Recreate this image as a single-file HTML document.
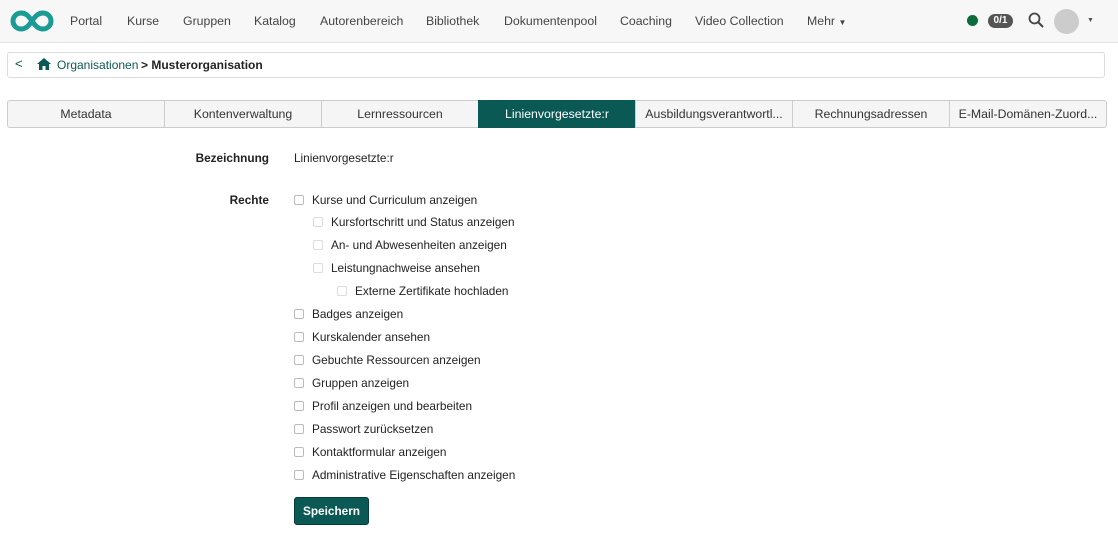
<!DOCTYPE html>
<html><head><meta charset="utf-8"><style>
body{margin:0;width:1118px;height:540px;background:#fff;font-family:"Liberation Sans",sans-serif;font-size:11.8px;color:#222;position:relative;overflow:hidden}
.nav{position:absolute;left:0;top:0;width:1118px;height:42px;background:#f7f7f7;border-bottom:1px solid #e5e5e5}
.nav a{position:absolute;top:14px;color:#444;font-size:12.3px}
.bc{position:absolute;left:7px;top:52px;width:1096px;height:24px;border:1px solid #ddd;border-radius:3px}
.bc span{position:absolute;top:5px;font-size:12px}
.tabs{position:absolute;left:7px;top:100px;display:flex}
.tab{width:156px;height:26px;border:1px solid #ccc;border-right:none;background:#f5f5f5;text-align:center;line-height:26px;font-size:12.3px;color:#333;white-space:nowrap;overflow:hidden}
.tab:first-child{border-radius:3px 0 0 3px}
.tab:last-child{border-right:1px solid #ccc;border-radius:0 3px 3px 0}
.tab.act{background:#0b5954;color:#fff;border-color:#0b5954}
.lbl{position:absolute;font-weight:bold;text-align:right;width:100px;left:169px}
.row{position:absolute;white-space:nowrap}
.row i{display:inline-block;width:8px;height:8px;border:1px solid #bbb;border-radius:2px;margin-right:8px;vertical-align:-1px}
.row.s i{border-color:#ddd}
.btn{position:absolute;left:294px;top:497px;width:73px;height:26px;background:#0b5954;border:1px solid #063c39;border-radius:3px;color:#fff;font-weight:bold;text-align:center;line-height:26px}
</style></head><body>
<div class="nav">
<svg style="position:absolute;left:10px;top:9px" width="44" height="24" viewBox="0 0 44 24"><path d="M22 12C18 6 15 4 11 4A8 8 0 0 0 11 20C15 20 18 18 22 12C26 6 29 4 33 4A8 8 0 0 1 33 20C29 20 26 18 22 12Z" fill="none" stroke="#1a9b94" stroke-width="5"/></svg>
<a style="left:70px">Portal</a><a style="left:127px">Kurse</a><a style="left:183px">Gruppen</a><a style="left:254px">Katalog</a><a style="left:320px">Autorenbereich</a><a style="left:426px">Bibliothek</a><a style="left:504px">Dokumentenpool</a><a style="left:620px">Coaching</a><a style="left:695px">Video Collection</a><a style="left:807px">Mehr <span style="font-size:8px">▼</span></a>
<div style="position:absolute;left:967px;top:15px;width:11px;height:11px;border-radius:50%;background:#0b6b3a"></div>
<div style="position:absolute;left:988px;top:14px;width:25px;height:14px;border-radius:7px;background:#555;color:#fff;font-size:10px;font-weight:bold;text-align:center;line-height:14px">0/1</div>
<svg style="position:absolute;left:1028px;top:12px" width="16" height="16" viewBox="0 0 16 16"><circle cx="6.5" cy="6.5" r="5" fill="none" stroke="#444" stroke-width="1.8"/><path d="M10 10L15 15" stroke="#444" stroke-width="2"/></svg>
<div style="position:absolute;left:1054px;top:9px;width:25px;height:25px;border-radius:50%;background:#ccc"></div>
<div style="position:absolute;left:1087px;top:17px;font-size:7px;color:#555">▼</div>
</div>
<div class="bc"><span style="left:7px;color:#0b5954;font-size:13px;top:3px">&lt;</span>
<svg style="position:absolute;left:29px;top:5px" width="14" height="12" viewBox="0 0 14 12"><path d="M7 0L14 6H12V12H8.5V8H5.5V12H2V6H0Z" fill="#0b5954"/></svg>
<span style="left:49px;color:#0b5954">Organisationen</span><span style="left:133px;font-weight:bold">&gt; Musterorganisation</span></div>
<div class="tabs"><div class="tab">Metadata</div><div class="tab">Kontenverwaltung</div><div class="tab">Lernressourcen</div><div class="tab act">Linienvorgesetzte:r</div><div class="tab">Ausbildungsverantwortl...</div><div class="tab">Rechnungsadressen</div><div class="tab">E-Mail-Domänen-Zuord...</div></div>
<div class="lbl" style="top:151px">Bezeichnung</div><div class="row" style="left:294px;top:151px">Linienvorgesetzte:r</div>
<div class="lbl" style="top:193px">Rechte</div>
<div class="row" style="left:294px;top:193px"><i></i>Kurse und Curriculum anzeigen</div>
<div class="row s" style="left:313px;top:215px"><i></i>Kursfortschritt und Status anzeigen</div>
<div class="row s" style="left:313px;top:238px"><i></i>An- und Abwesenheiten anzeigen</div>
<div class="row s" style="left:313px;top:261px"><i></i>Leistungnachweise ansehen</div>
<div class="row s" style="left:337px;top:284px"><i></i>Externe Zertifikate hochladen</div>
<div class="row" style="left:294px;top:307px"><i></i>Badges anzeigen</div>
<div class="row" style="left:294px;top:330px"><i></i>Kurskalender ansehen</div>
<div class="row" style="left:294px;top:353px"><i></i>Gebuchte Ressourcen anzeigen</div>
<div class="row" style="left:294px;top:376px"><i></i>Gruppen anzeigen</div>
<div class="row" style="left:294px;top:399px"><i></i>Profil anzeigen und bearbeiten</div>
<div class="row" style="left:294px;top:422px"><i></i>Passwort zurücksetzen</div>
<div class="row" style="left:294px;top:445px"><i></i>Kontaktformular anzeigen</div>
<div class="row" style="left:294px;top:468px"><i></i>Administrative Eigenschaften anzeigen</div>
<div class="btn">Speichern</div>
</body></html>
